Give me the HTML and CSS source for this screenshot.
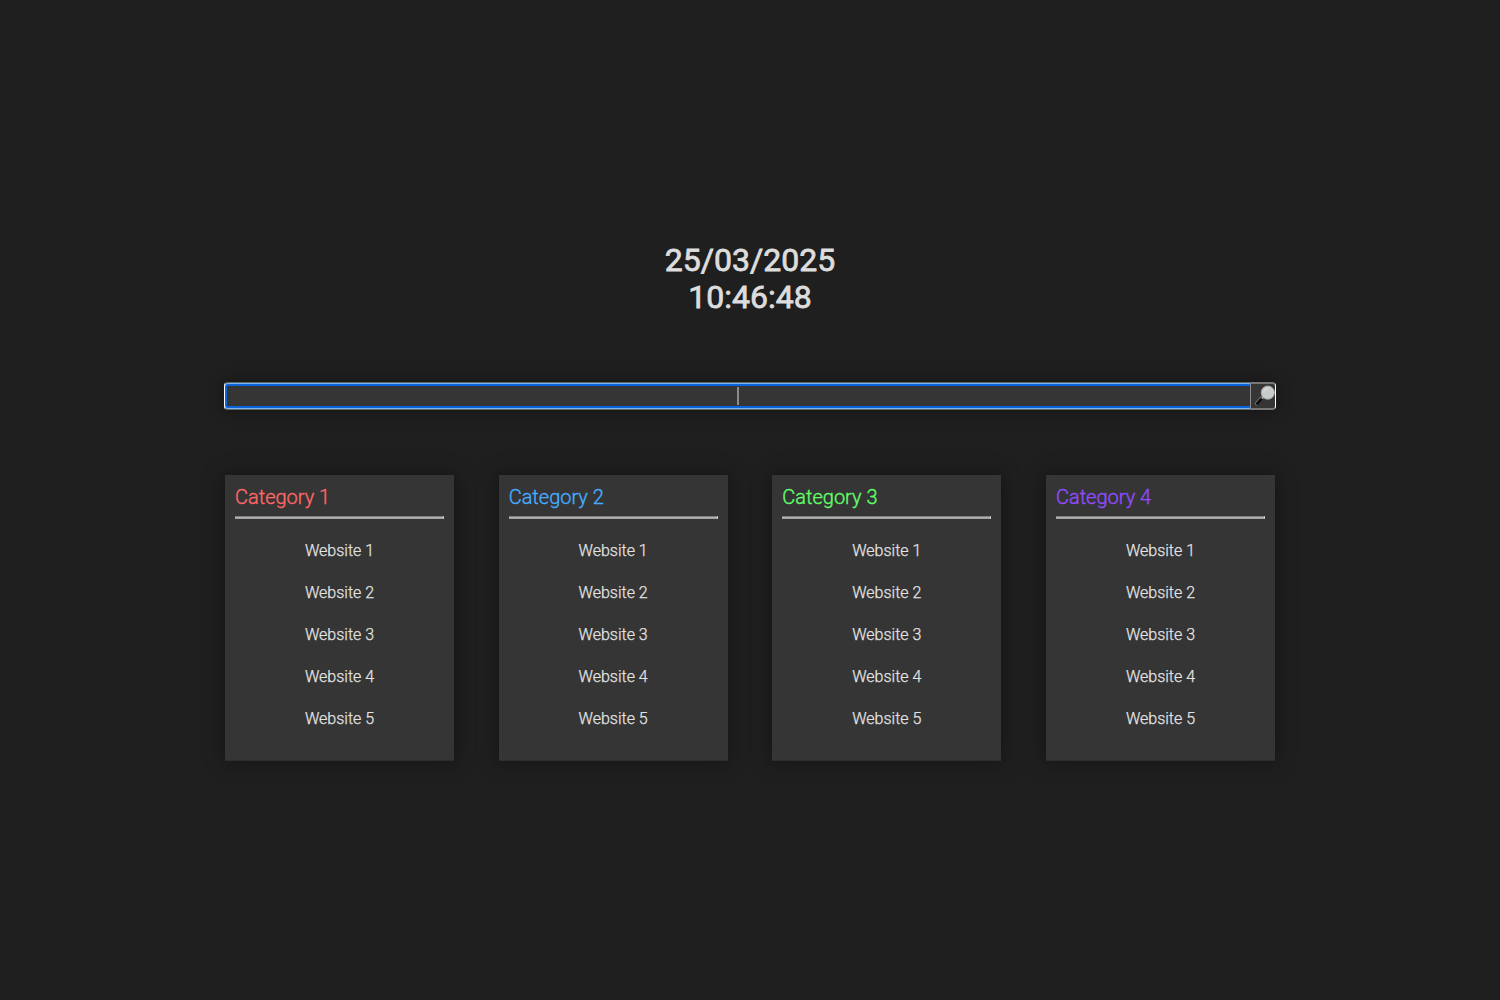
FILE: index.html
```html
<!DOCTYPE html>
<html lang="en">
<head>
<meta charset="utf-8">
<title>Start page</title>
<link rel="stylesheet" href="styles.css">
</head>
<body>
<main class="page">
  <div class="clock"><div>25/03/2025</div><div>10:46:48</div></div>
  <div class="search">
    <div class="field"><span class="caret"></span></div>
    <div class="submit">
      <svg width="24" height="24" viewBox="0 0 24 24">
        <path d="M6 19.4l5-5.4" stroke="#6e6e6e" stroke-width="4.2" stroke-linecap="round"/>
        <path d="M6.5 19.6l4.6-5" stroke="#0d0d0d" stroke-width="3" stroke-linecap="round"/>
        <path d="M10.8 14.6l2-2" stroke="#aaa" stroke-width="2"/>
        <circle cx="16.8" cy="8.6" r="6.6" fill="#c9cccd" stroke="#a8a8a8" stroke-width="1"/>
        <path d="M12.8 7.5q1.2-3 4-3" stroke="#e4e4e4" stroke-width="1" fill="none"/>
      </svg>
    </div>
  </div>
  <div class="cards">
    <section class="card"><h2 class="red">Category 1</h2><div class="rule"></div><ul><li>Website 1</li><li>Website 2</li><li>Website 3</li><li>Website 4</li><li>Website 5</li></ul></section>
    <section class="card"><h2 class="blue">Category 2</h2><div class="rule"></div><ul><li>Website 1</li><li>Website 2</li><li>Website 3</li><li>Website 4</li><li>Website 5</li></ul></section>
    <section class="card"><h2 class="green">Category 3</h2><div class="rule"></div><ul><li>Website 1</li><li>Website 2</li><li>Website 3</li><li>Website 4</li><li>Website 5</li></ul></section>
    <section class="card"><h2 class="purple">Category 4</h2><div class="rule"></div><ul><li>Website 1</li><li>Website 2</li><li>Website 3</li><li>Website 4</li><li>Website 5</li></ul></section>
  </div>
</main>
</body>
</html>
```
FILE: styles.css
```css
* { box-sizing: border-box; }
body { margin: 0; background: #1f1f1f; color: #ddd; font-family: Roboto, sans-serif; }
.page { width: 1052px; height: 1000px; margin: 0 auto; padding-top: 242px; }
.clock { height: 140px; text-align: center; font-size: 32px; font-weight: 400; line-height: 37px; -webkit-text-stroke: .8px #ddd; }
.search { display: flex; height: 28px; border-radius: 4px; box-shadow: 0 0 15px rgba(0,0,0,.4); background: #353535; }
.field { flex: 1; display: flex; justify-content: center; align-items: center; border: 1px solid #5e6368; border-left: 1px solid #fff; border-right: 0; border-radius: 4px 0 0 4px; box-shadow: inset 0 1px #7fb6ee, inset 0 -1px #7fb6ee, inset 2px 0 #0b64d8, inset 0 3px #0b64d8, inset 0 -3px #0b64d8; }
.caret { width: 2px; height: 18px; background: #8b8b8b; }
.submit { width: 26px; border: 1px solid #8b8b8b; border-top: 2px solid #777; border-bottom: 2px solid #777; border-right: 1px solid #fff; border-radius: 0 4px 4px 0; }
.submit svg { display: block; }
.cards { display: flex; justify-content: space-between; margin: 65px 1px 0; }
.card { width: 229px; height: 286px; padding: 10px; background: #353535; border-bottom: 1px solid #2e2e2e; box-shadow: 0 0 20px rgba(0,0,0,.4); }
h2 { margin: 0; font-size: 20px; font-weight: 300; line-height: 24px; -webkit-text-stroke: .35px currentColor; }
.rule { height: 3px; margin-top: 7px; border-top: 1px solid #7e7e7e; border-bottom: 1px solid #a0a0a0; background: #b3b3b3; border-right: 1px solid #ddd; }
ul { list-style: none; margin: 11px 0 0; padding: 0; text-align: center; font-size: 16px; font-weight: 300; line-height: 42px; color: #e4e4e4; -webkit-text-stroke: .25px currentColor; }
.red { color: #ff6868; }
.blue { color: #45adff; }
.green { color: #60ff68; }
.purple { color: #944cff; }
```
